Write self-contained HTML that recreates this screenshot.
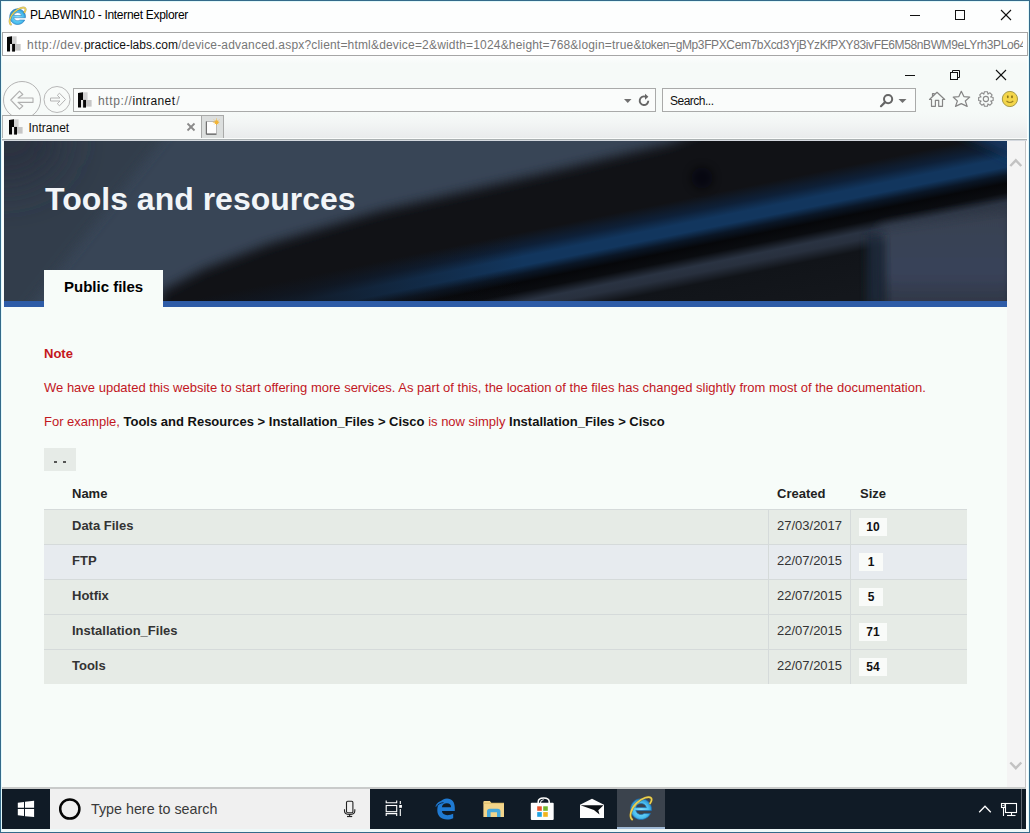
<!DOCTYPE html>
<html><head><meta charset="utf-8">
<style>
*{margin:0;padding:0;box-sizing:border-box}
html,body{width:1030px;height:833px;overflow:hidden;background:#fff;font-family:"Liberation Sans",sans-serif}
.a{position:absolute}
#win{position:absolute;left:0;top:0;width:1030px;height:833px;border:1px solid #346a8a;background:#fdfefe;box-shadow:inset 0 0 0 1px #e2f9fb}
#title{position:absolute;left:30px;top:8px;font-size:12px;letter-spacing:-0.3px;color:#000;white-space:nowrap}
#urlbox{position:absolute;left:2px;top:32px;width:1026px;height:24px;border:1px solid #a6a6a6;background:#fff;overflow:hidden}
#urltxt{position:absolute;left:24px;top:5px;width:996px;overflow:hidden;font-size:12px;color:#777;white-space:nowrap;letter-spacing:0px}
#urltxt b{font-weight:normal;color:#111}
#chrome{position:absolute;left:2px;top:56px;width:1025px;height:84px;background:linear-gradient(#fcfdfd 0px,#f6faf8 8px,#f6faf8 100%)}
#addr{position:absolute;left:73px;top:88px;width:583px;height:24px;border:1px solid #a9aaa9;background:#fafcfb}
#search{position:absolute;left:662px;top:88px;width:254px;height:24px;border:1px solid #a9aaa9;background:#fafcfb}
#tabrow{position:absolute;left:2px;top:112px;width:1025px;height:26px;background:linear-gradient(#f6faf8 0%,#f3f6f5 40%,#e9ebec 100%)}
#tab{position:absolute;left:2px;top:115px;width:200px;height:23px;border-top:1px solid #a9aaa9;border-left:1px solid #b4b6b5;border-right:1px solid #c9cac9;background:#f8faf9}
#newtab{position:absolute;left:201px;top:115px;width:23px;height:23px;border:1px solid #a9aaa9;border-bottom:none;background:#dcdfde}
#content{position:absolute;left:3px;top:141px;width:1004px;height:646px;background:#f7fcf9}
#banner{position:absolute;left:4px;top:141px;width:1003px;height:166px;overflow:hidden;background:#3b475a}
#scroll{position:absolute;left:1007px;top:141px;width:19px;height:646px;background:#f4f4f4;border-right:1px solid #c4c4c4}
#taskbar{position:absolute;left:2px;top:789px;width:1024px;height:40px;background:#101b26}
</style></head><body>
<div id="win"></div>
<svg width="0" height="0" style="position:absolute">
<defs>
<symbol id="fav" viewBox="0 0 14 16">
<rect x="5" y="0.3" width="4.6" height="7.6" fill="#d2d2d2"/>
<rect x="8" y="8" width="5.6" height="6.6" fill="#c6c6c6"/>
<rect x="3" y="8" width="2.1" height="7.5" fill="#e8e8e8"/>
<polygon points="0,0.9 5,0.2 5,7.9 3,7.9 3,15.6 0,15.6" fill="#060606"/>
<rect x="5.1" y="7.9" width="2.9" height="7.7" fill="#080808"/>
</symbol>
<symbol id="ie" viewBox="0 0 24 24">
<radialGradient id="ieg" cx="0.5" cy="0.55" r="0.6"><stop offset="0" stop-color="#8fe4ff"/><stop offset="0.6" stop-color="#4cc0ef"/><stop offset="1" stop-color="#1f7cc4"/></radialGradient>
<path d="M21.7 13.8 A9.3 9.3 0 1 0 20.9 16.5 L15.33 16.5 A4.9 4.9 0 0 1 7.78 13.8 Z M7.78 11.2 A4.9 4.9 0 0 1 17.22 11.2 Z" fill="url(#ieg)" fill-rule="evenodd" stroke="#1d6fb3" stroke-width="0.6"/>
<path d="M4.6 21.8 C1.8 19.5 3 12.5 8.5 7.2 C13.5 2.5 19.5 0.9 21.3 2.6 C22.4 3.8 21.6 6 20.5 7.5" fill="none" stroke="#7a6420" stroke-width="2.4" stroke-linecap="round" opacity="0.5"/>
<path d="M4.6 21.8 C1.8 19.5 3 12.5 8.5 7.2 C13.5 2.5 19.5 0.9 21.3 2.6 C22.4 3.8 21.6 6 20.5 7.5" fill="none" stroke="#ecd050" stroke-width="1.5" stroke-linecap="round"/>
</symbol>
</defs></svg>

<!-- title bar -->
<svg class="a" style="left:6.6px;top:5.5px" width="20.4" height="20.4" viewBox="0 0 24 24"><use href="#ie"/></svg>
<div id="title">PLABWIN10 - Internet Explorer</div>
<svg class="a" style="left:900px;top:0px" width="128" height="30">
<line x1="10" y1="15.5" x2="20" y2="15.5" stroke="#111" stroke-width="1"/>
<rect x="55.5" y="10.5" width="9" height="9" fill="none" stroke="#111" stroke-width="1"/>
<line x1="101" y1="10" x2="111" y2="20" stroke="#111" stroke-width="1.1"/>
<line x1="111" y1="10" x2="101" y2="20" stroke="#111" stroke-width="1.1"/>
</svg>

<div id="urlbox"><svg class="a" style="left:4px;top:3px" width="14" height="16"><use href="#fav"/></svg><div id="urltxt"><span style="letter-spacing:0.46px">http://dev.</span><b>practice-labs.com</b><span style="letter-spacing:0.18px">/device-advanced.aspx?client=html&amp;device=2&amp;width=1024&amp;height=768&amp;login=true&amp;</span><span style="letter-spacing:-0.38px">token=gMp3FPXCem7bXcd3YjBYzKfPXY83ivFE6M58nBWM9eLYrh3PLo64</span></div></div>
<div id="chrome"></div>
<div id="tabrow"></div>
<div class="a" style="left:2px;top:138px;width:1025px;height:1px;background:#fafcfb"></div>
<div class="a" style="left:2px;top:139px;width:1025px;height:1px;background:#abb1b2"></div>
<div class="a" style="left:2px;top:140px;width:1025px;height:1px;background:#d4d8de"></div>
<div id="addr"></div>
<div id="search"></div>
<div id="tab"></div>
<div id="newtab"></div>
<svg class="a" style="left:9px;top:119px" width="14" height="16"><use href="#fav"/></svg>
<div class="a" style="left:28.5px;top:121px;font-size:12px;line-height:14px;color:#111;white-space:nowrap">Intranet</div>
<svg class="a" style="left:180px;top:115px" width="45" height="25">
<line x1="7.5" y1="8.5" x2="14.5" y2="15.5" stroke="#8a8a8a" stroke-width="1.8"/>
<line x1="14.5" y1="8.5" x2="7.5" y2="15.5" stroke="#8a8a8a" stroke-width="1.8"/>
<rect x="26.5" y="6.5" width="10" height="12" fill="#fdfdfd" stroke="#b8b8b8" stroke-width="1"/>
<polyline points="26.3,6.5 26.3,19.3 36.5,19.3" fill="none" stroke="#606060" stroke-width="1"/>
<circle cx="36.5" cy="7.2" r="2" fill="#f2b437"/>
<g stroke="#f2b437" stroke-width="0.9" stroke-dasharray="1 0.8"><line x1="36.5" y1="3.6" x2="36.5" y2="10.8"/><line x1="32.9" y1="7.2" x2="40.1" y2="7.2"/><line x1="34" y1="4.7" x2="39" y2="9.7"/><line x1="39" y1="4.7" x2="34" y2="9.7"/></g>
</svg>
<!-- inner IE chrome -->
<svg class="a" style="left:895px;top:62px" width="125" height="24">
<line x1="10" y1="13.5" x2="20" y2="13.5" stroke="#111" stroke-width="1"/>
<rect x="55.5" y="10.5" width="7" height="7" fill="none" stroke="#111" stroke-width="1"/>
<polyline points="57.5,10.5 57.5,8.5 64.5,8.5 64.5,15.5 62.5,15.5" fill="none" stroke="#111" stroke-width="1"/>
<line x1="101" y1="8" x2="111" y2="18" stroke="#111" stroke-width="1.1"/>
<line x1="111" y1="8" x2="101" y2="18" stroke="#111" stroke-width="1.1"/>
</svg>
<svg class="a" style="left:0px;top:78px" width="75" height="37">
<circle cx="22" cy="22" r="18.5" fill="#f8fbf9" stroke="#b4b4b4" stroke-width="1"/>
<path d="M10.8 22 L19.5 13.2 L22.8 16.5 L18 20 L33 20 L33 24.4 L18 24.4 L22.8 28 L19.5 31.2 Z" fill="none" stroke="#b0b0b0" stroke-width="1.1" stroke-linejoin="round"/>
<circle cx="57" cy="21.5" r="13" fill="#f8fbf9" stroke="#b8b8b8" stroke-width="1"/>
<path d="M65.5 21.5 L59.5 15.2 L57.3 17.3 L60 20 L50.5 20 L50.5 23 L60 23 L57.3 25.7 L59.5 27.8 Z" fill="none" stroke="#b4b4b4" stroke-width="1" stroke-linejoin="round"/>
</svg>
<svg class="a" style="left:78px;top:92px" width="14" height="16"><use href="#fav"/></svg>
<div class="a" style="left:98px;top:94px;font-size:12px;line-height:14px;color:#6d6d6d;white-space:nowrap"><span style="letter-spacing:0.64px">http://</span><span style="color:#111;letter-spacing:0.35px">intranet</span><span style="margin-left:1px">/</span></div>
<svg class="a" style="left:620px;top:90px" width="35" height="20">
<polygon points="4,9 11.5,9 7.75,13" fill="#707070"/>
<path d="M28.3 10.8 A4.3 4.3 0 1 1 25.2 6.6" fill="none" stroke="#666" stroke-width="1.9"/>
<polygon points="25,3.8 28.4,6.7 25,9.8" fill="#666"/>
</svg>
<div class="a" style="left:670px;top:94px;font-size:12px;line-height:14px;color:#111;white-space:nowrap;letter-spacing:-0.5px">Search...</div>
<svg class="a" style="left:875px;top:90px" width="36" height="20">
<circle cx="13.1" cy="9.1" r="4.1" fill="none" stroke="#666" stroke-width="2"/>
<line x1="10.1" y1="12.1" x2="6" y2="16.2" stroke="#666" stroke-width="2.2" stroke-linecap="round"/>
<polygon points="23.5,9 31.5,9 27.5,13" fill="#707070"/>
</svg>
<svg class="a" style="left:925px;top:88px" width="100" height="22">
<path d="M4.5 11.5 L12 4.3 L19.7 11.5 L17.5 11.5 L17.5 18.3 L13.7 18.3 L13.7 12.3 L10.4 12.3 L10.4 18.3 L6.5 18.3 L6.5 11.5 Z M7.5 8.5 L7.5 5.6 L9.2 5.6 L9.2 6.9" fill="none" stroke="#858585" stroke-width="1.2" stroke-linejoin="round"/>
<path d="M36.3 3.3 L38.9 8.6 L44.7 9.1 L40.3 13 L42.2 18.4 L36.3 15.6 L30.5 18.4 L32.4 13 L28.2 9.1 L33.9 8.6 Z" fill="none" stroke="#858585" stroke-width="1.2" stroke-linejoin="round"/>
<g transform="translate(60.9 11)"><path d="M4.84 -2.16 L7.25 -1.47 L7.25 1.47 L4.84 2.16 L4.95 1.89 L6.17 4.09 L4.09 6.17 L1.89 4.95 L2.16 4.84 L1.47 7.25 L-1.47 7.25 L-2.16 4.84 L-1.89 4.95 L-4.09 6.17 L-6.17 4.09 L-4.95 1.89 L-4.84 2.16 L-7.25 1.47 L-7.25 -1.47 L-4.84 -2.16 L-4.95 -1.89 L-6.17 -4.09 L-4.09 -6.17 L-1.89 -4.95 L-2.16 -4.84 L-1.47 -7.25 L1.47 -7.25 L2.16 -4.84 L1.89 -4.95 L4.09 -6.17 L6.17 -4.09 L4.95 -1.89 Z" fill="none" stroke="#8a8a8a" stroke-width="1.1" stroke-linejoin="round"/><circle cx="0" cy="0" r="2.6" fill="none" stroke="#8a8a8a" stroke-width="1.1"/></g>
<circle cx="84.9" cy="11" r="7.6" fill="#f4d64a" stroke="#a69a48" stroke-width="1"/>
<ellipse cx="82.8" cy="8.8" rx="0.9" ry="1.5" fill="#8a7418"/>
<ellipse cx="87" cy="8.8" rx="0.9" ry="1.5" fill="#8a7418"/>
<path d="M81.5 13 Q84.9 16 88.3 13" fill="none" stroke="#9a8220" stroke-width="1.1"/>
</svg>

<div id="content"></div>
<div id="banner"><svg width="1003" height="166" viewBox="0 0 1003 166" style="position:absolute;left:0;top:0">
<defs>
<filter id="b4" x="-50%" y="-50%" width="200%" height="200%"><feGaussianBlur stdDeviation="4"/></filter>
<filter id="b6" x="-20%" y="-80%" width="140%" height="260%"><feGaussianBlur stdDeviation="6"/></filter>
<filter id="b10" x="-50%" y="-80%" width="200%" height="260%"><feGaussianBlur stdDeviation="10"/></filter>
<filter id="b20" x="-50%" y="-80%" width="200%" height="260%"><feGaussianBlur stdDeviation="20"/></filter>
<linearGradient id="g" gradientUnits="userSpaceOnUse" x1="526" y1="16" x2="566" y2="212">
<stop offset="0.000" stop-color="#111216"/>
<stop offset="0.360" stop-color="#111216"/>
<stop offset="0.430" stop-color="#0e2038"/>
<stop offset="0.480" stop-color="#12365e"/>
<stop offset="0.525" stop-color="#12365e"/>
<stop offset="0.565" stop-color="#0a1626"/>
<stop offset="0.605" stop-color="#06070a"/>
<stop offset="0.650" stop-color="#0a0c10"/>
<stop offset="0.700" stop-color="#2a3342"/>
<stop offset="0.735" stop-color="#28303e"/>
<stop offset="0.790" stop-color="#111419"/>
<stop offset="1.000" stop-color="#14171c"/>
</linearGradient>
<linearGradient id="gr" x1="0" y1="0" x2="0" y2="1">
<stop offset="0" stop-color="#37414f"/><stop offset="0.6" stop-color="#39435a"/><stop offset="1" stop-color="#2c323e"/>
</linearGradient>
<linearGradient id="fade" gradientUnits="userSpaceOnUse" x1="300" y1="0" x2="520" y2="0">
<stop offset="0" stop-color="#111216" stop-opacity="0.7"/><stop offset="1" stop-color="#111216" stop-opacity="0"/>
</linearGradient>
</defs>
<rect x="0" y="0" width="1003" height="166" fill="url(#g)"/>

<rect x="0" y="0" width="1003" height="166" fill="url(#fade)"/>
<polygon points="876,86 1010,66 1010,175 880,175" fill="url(#gr)" filter="url(#b6)"/>
<polygon points="930,-20 1020,-20 1020,22" fill="#12365e" filter="url(#b6)"/>
<rect x="863" y="94" width="16" height="70" fill="#1c2a3c" filter="url(#b4)" opacity="0.8"/>
<polygon points="-20,-20 720,-20 667,2 546,31 376,70 265,103 200,128 158,150 150,190 -20,190" fill="#394557" filter="url(#b6)"/>
<polygon points="-20,-20 172,-20 14,180 -20,180" fill="#333c4c" filter="url(#b6)"/>
<ellipse cx="0" cy="0" rx="60" ry="45" fill="#2a323f" filter="url(#b20)"/>
<circle cx="698" cy="37" r="11" fill="#050607" filter="url(#b4)" opacity="0.6"/>
</svg>
<div style="position:absolute;left:0;top:160px;width:1003px;height:6px;background:#2e5ca7"></div>
</div>
<div class="a" style="left:45px;top:181px;font-size:32px;line-height:37px;font-weight:bold;color:#f2f5f8;white-space:nowrap">Tools and resources</div>
<div class="a" style="left:44px;top:270px;width:119px;height:37px;background:#f7fcf9"></div>
<div class="a" style="left:64px;top:278px;font-size:15px;line-height:17px;font-weight:bold;color:#000;white-space:nowrap">Public files</div>

<div id="scroll"></div>
<svg class="a" style="left:1007px;top:150px" width="18" height="25"><polyline points="3.3,16 8.8,10.3 14.3,16" fill="none" stroke="#c2c2c2" stroke-width="2.4"/></svg>
<svg class="a" style="left:1007px;top:755px" width="18" height="25"><polyline points="3.3,7.5 8.8,13.2 14.3,7.5" fill="none" stroke="#c2c2c2" stroke-width="2.4"/></svg>
<div id="taskbar"></div>
<div class="a" style="left:2px;top:787px;width:1024px;height:2px;background:#c9cbca"></div>
<div class="a" style="left:2px;top:829px;width:1027px;height:3px;background:#eef8f8"></div>
<svg class="a" style="left:0px;top:789px" width="60" height="40">
<polygon points="17.8,13.8 24,13 24,18.8 17.8,18.8" fill="#fff"/>
<polygon points="25,12.8 34.1,11.8 34.1,18.8 25,18.8" fill="#fff"/>
<polygon points="17.8,20 24,20 24,27.1 17.8,26.3" fill="#fff"/>
<polygon points="25,20 34.1,20 34.1,28.1 25,27.2" fill="#fff"/>
</svg>
<div class="a" style="left:50px;top:789px;width:320px;height:40px;background:#f0f0f0"></div>
<svg class="a" style="left:50px;top:789px" width="320" height="40">
<circle cx="19.8" cy="20" r="9.6" fill="none" stroke="#050505" stroke-width="2.5"/>
<rect x="296.5" y="12.3" width="6.4" height="11.4" rx="1.2" fill="none" stroke="#222" stroke-width="1.1"/>
<path d="M294.5 20.2 L294.5 22 Q294.5 25.4 299.6 25.4 Q304.8 25.4 304.8 22 L304.8 20.2" fill="none" stroke="#222" stroke-width="1.1"/>
<line x1="299.6" y1="25.4" x2="299.6" y2="27.4" stroke="#222" stroke-width="1.1"/>
<line x1="297" y1="27.5" x2="302.2" y2="27.5" stroke="#222" stroke-width="1.2"/>
</svg>
<div class="a" style="left:91px;top:801px;font-size:14.3px;line-height:16px;color:#3a3a3a;white-space:nowrap">Type here to search</div>
<svg class="a" style="left:370px;top:789px" width="300" height="40">
<g fill="none" stroke="#fff" stroke-width="1.1">
<polyline points="16.2,11.5 16.2,13.8 26.7,13.8 26.7,11.5"/>
<rect x="16.2" y="16.5" width="10.5" height="6.2"/>
<polyline points="16.2,27 16.2,24.6 26.7,24.6 26.7,27"/>
<line x1="30.3" y1="12" x2="30.3" y2="15"/><line x1="30.3" y1="20" x2="30.3" y2="27"/>
</g>
<rect x="29.2" y="16" width="2.7" height="2.8" fill="#fff"/>
<path transform="translate(65 9.3)" d="M2.3 12 C2.3 5.5 6.5 0.3 12 0.3 C17 0.3 19.8 4 19.8 9.5 L19.8 12.8 L6.9 12.8 C7.1 15.6 9.4 16.9 12.3 16.9 C14.6 16.9 16.5 16.4 18.2 15.5 L18.2 20 C16.4 20.8 14.5 21.2 12.2 21.2 C6 21.2 2.3 17.5 2.3 12 Z M6.9 9 C7.2 6.6 9 5 11.8 5 C14.6 5 16 6.6 16.1 9 Z" fill="#1f7ad2" fill-rule="evenodd"/>
<path transform="translate(65 9.3)" d="M0.4 8.8 C1.2 5.2 4.6 2.2 9.5 2.6 C6.5 3.2 4 5 2.6 7.6 C1.8 7.9 1 8.3 0.4 8.8 Z" fill="#1f7ad2"/>
<path transform="translate(65 9.3)" d="M1 8.4 C3 6 5.5 4.6 8.5 4.3" fill="none" stroke="#0b1a30" stroke-width="0.8"/>
<g transform="translate(113.4 11)">
<path d="M0 1.5 L0 17 L20.6 17 L20.6 3 L8 3 L6.5 1 L1 1 Z" fill="#f3d58a"/>
<path d="M0 3.2 L20.6 3.2" stroke="#d8b660" stroke-width="0.8"/>
<path d="M3.6 17 L3.6 11.5 Q3.6 8.7 6.5 8.7 L14.2 8.7 Q17.1 8.7 17.1 11.5 L17.1 17 L13.6 17 L13.6 12.2 L7.2 12.2 L7.2 17 Z" fill="#47a9dc"/>
</g>
<g transform="translate(160.8 797.3) translate(0 -789)">
<path d="M7.4 6.2 L7.4 4.5 Q7.4 0.6 12.9 0.6 Q18.4 0.6 18.4 4.5 L18.4 6.2" fill="none" stroke="#fff" stroke-width="1.5"/>
<path d="M9.6 6 Q9.6 2.4 12.9 2.4" fill="none" stroke="#fff" stroke-width="1"/>
<rect x="0" y="5.4" width="22.9" height="17.2" rx="1" fill="#fdfdfd"/>
<rect x="6.4" y="9" width="4.6" height="4.5" fill="#e9542b"/>
<rect x="12.4" y="9" width="4.6" height="4.5" fill="#72b62c"/>
<rect x="6.4" y="14.8" width="4.6" height="4.7" fill="#20a2e2"/>
<rect x="12.4" y="14.8" width="4.6" height="4.7" fill="#f2b41e"/>
</g>
<g transform="translate(210 798.7) translate(0 -789)">
<polygon points="0,6 12,0 24,6 24,19.3 0,19.3" fill="#fdfdfd"/>
<polygon points="0.5,6.6 23.5,6.6 18.3,11.5 19.5,15.7 13.9,11.2" fill="#0b0f14"/>
</g>
</svg>
<div class="a" style="left:617px;top:789px;width:48px;height:40px;background:#3b434d"></div>
<div class="a" style="left:617px;top:827px;width:48px;height:2px;background:#a0bad6"></div>
<svg class="a" style="left:627px;top:795px" width="27" height="27" viewBox="0 0 24 24"><use href="#ie"/></svg>
<svg class="a" style="left:970px;top:789px" width="60" height="40">
<polyline points="9.2,23.2 15,17.3 20.8,23.2" fill="none" stroke="#fff" stroke-width="1.3"/>
<g fill="none" stroke="#fff" stroke-width="1.1">
<rect x="31.5" y="14.5" width="3.5" height="4"/>
<rect x="35.5" y="14.5" width="11" height="9"/>
<line x1="33.5" y1="18.5" x2="33.5" y2="27"/>
<line x1="41.5" y1="23.5" x2="41.5" y2="26.5"/>
<line x1="37" y1="26.5" x2="45.5" y2="26.5"/>
<polyline points="32.6,16 33.3,17 34,16" stroke-width="0.7"/>
</g>
<line x1="51.5" y1="0" x2="51.5" y2="40" stroke="#5e6670" stroke-width="1"/>
</svg>

<!-- page content -->
<div class="a" style="left:44px;top:346px;font-size:13px;line-height:15px;font-weight:bold;color:#c4161c">Note</div>
<div class="a" style="left:44px;top:380px;font-size:13px;line-height:15px;color:#c2171e;white-space:nowrap">We have updated this website to start offering more services. As part of this, the location of the files has changed slightly from most of the documentation.</div>
<div class="a" style="left:44px;top:414px;font-size:13px;line-height:15px;color:#c2171e;white-space:nowrap">For example, <b style="color:#111">Tools and Resources &gt; Installation_Files &gt; Cisco</b> is now simply <b style="color:#111">Installation_Files &gt; Cisco</b></div>
<div class="a" style="left:44px;top:448px;width:32px;height:23px;background:#e6ebe7"></div>
<div class="a" style="left:54px;top:461px;width:3px;height:2px;background:#555"></div>
<div class="a" style="left:63px;top:461px;width:3px;height:2px;background:#555"></div>
<div class="a" style="left:72px;top:486px;font-size:13px;line-height:15px;font-weight:bold;color:#222">Name</div>
<div class="a" style="left:777px;top:486px;font-size:13px;line-height:15px;font-weight:bold;color:#222">Created</div>
<div class="a" style="left:860px;top:486px;font-size:13px;line-height:15px;font-weight:bold;color:#222">Size</div>
<div class="a" style="left:44px;top:509px;width:923px;height:35px;background:#e6ebe6;border-top:1px solid #d5dada"></div>
<div class="a" style="left:768px;top:509px;width:1px;height:35px;background:#d5dada"></div>
<div class="a" style="left:850px;top:509px;width:1px;height:35px;background:#d5dada"></div>
<div class="a" style="left:72px;top:518px;font-size:13px;line-height:15px;font-weight:bold;color:#333">Data Files</div>
<div class="a" style="left:777px;top:518px;font-size:13px;line-height:15px;color:#333">27/03/2017</div>
<div class="a" style="left:859px;top:518px;width:28px;height:18px;background:#f9fbf9;font-size:12px;line-height:18px;font-weight:bold;color:#111;text-align:center">10</div>
<div class="a" style="left:44px;top:544px;width:923px;height:35px;background:#e7ebef;border-top:1px solid #d5dada"></div>
<div class="a" style="left:768px;top:544px;width:1px;height:35px;background:#d5dada"></div>
<div class="a" style="left:850px;top:544px;width:1px;height:35px;background:#d5dada"></div>
<div class="a" style="left:72px;top:553px;font-size:13px;line-height:15px;font-weight:bold;color:#333">FTP</div>
<div class="a" style="left:777px;top:553px;font-size:13px;line-height:15px;color:#333">22/07/2015</div>
<div class="a" style="left:859px;top:553px;width:24px;height:18px;background:#f9fbf9;font-size:12px;line-height:18px;font-weight:bold;color:#111;text-align:center">1</div>
<div class="a" style="left:44px;top:579px;width:923px;height:35px;background:#e6ebe6;border-top:1px solid #d5dada"></div>
<div class="a" style="left:768px;top:579px;width:1px;height:35px;background:#d5dada"></div>
<div class="a" style="left:850px;top:579px;width:1px;height:35px;background:#d5dada"></div>
<div class="a" style="left:72px;top:588px;font-size:13px;line-height:15px;font-weight:bold;color:#333">Hotfix</div>
<div class="a" style="left:777px;top:588px;font-size:13px;line-height:15px;color:#333">22/07/2015</div>
<div class="a" style="left:859px;top:588px;width:24px;height:18px;background:#f9fbf9;font-size:12px;line-height:18px;font-weight:bold;color:#111;text-align:center">5</div>
<div class="a" style="left:44px;top:614px;width:923px;height:35px;background:#e6ebe6;border-top:1px solid #d5dada"></div>
<div class="a" style="left:768px;top:614px;width:1px;height:35px;background:#d5dada"></div>
<div class="a" style="left:850px;top:614px;width:1px;height:35px;background:#d5dada"></div>
<div class="a" style="left:72px;top:623px;font-size:13px;line-height:15px;font-weight:bold;color:#333">Installation_Files</div>
<div class="a" style="left:777px;top:623px;font-size:13px;line-height:15px;color:#333">22/07/2015</div>
<div class="a" style="left:859px;top:623px;width:28px;height:18px;background:#f9fbf9;font-size:12px;line-height:18px;font-weight:bold;color:#111;text-align:center">71</div>
<div class="a" style="left:44px;top:649px;width:923px;height:35px;background:#e6ebe6;border-top:1px solid #d5dada"></div>
<div class="a" style="left:768px;top:649px;width:1px;height:35px;background:#d5dada"></div>
<div class="a" style="left:850px;top:649px;width:1px;height:35px;background:#d5dada"></div>
<div class="a" style="left:72px;top:658px;font-size:13px;line-height:15px;font-weight:bold;color:#333">Tools</div>
<div class="a" style="left:777px;top:658px;font-size:13px;line-height:15px;color:#333">22/07/2015</div>
<div class="a" style="left:859px;top:658px;width:28px;height:18px;background:#f9fbf9;font-size:12px;line-height:18px;font-weight:bold;color:#111;text-align:center">54</div>
</body></html>
